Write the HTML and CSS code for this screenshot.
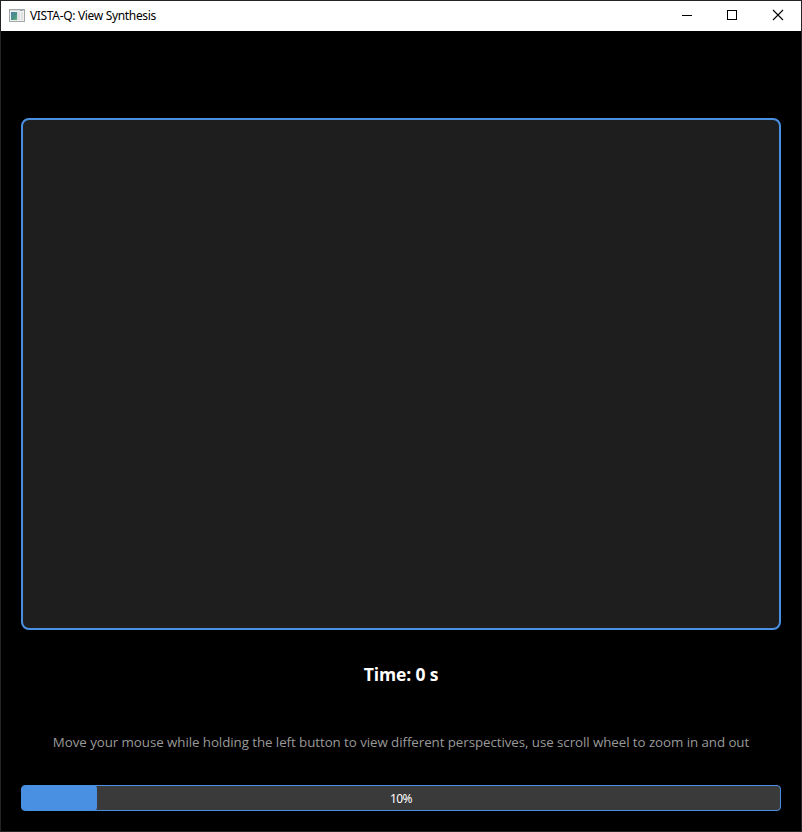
FILE: index.html
```
<!DOCTYPE html>
<html lang="en">
<head>
<meta charset="utf-8">
<title>VISTA-Q: View Synthesis</title>
<link rel="stylesheet" href="styles.css">
</head>
<body>
<div class="window">
  <header class="titlebar">
    <svg class="app-icon" width="16" height="16" viewBox="0 0 16 16" shape-rendering="crispEdges">
      <defs><linearGradient id="pane" x1="0" y1="0" x2="1" y2="1"><stop offset="0" stop-color="#4f7fa8"/><stop offset=".6" stop-color="#4b9384"/><stop offset="1" stop-color="#65b078"/></linearGradient></defs>
      <rect x="0.5" y="1.5" width="15" height="12" fill="#f1f1f1" stroke="#a2a7aa"/>
      <rect x="1" y="2" width="14" height="1" fill="#d5d9db"/>
      <rect x="2" y="4" width="6" height="8" fill="url(#pane)"/>
      <rect x="8" y="4" width="3" height="8" fill="#dfe2e4"/>
      <rect x="12" y="4" width="2" height="8" fill="#e0e0e0"/>
      <rect x="11" y="2" width="3" height="1" fill="#9ba8b0"/>
    </svg>
    <h1 class="title">VISTA-Q: View Synthesis</h1>
    <div class="controls">
      <svg width="46" height="30" viewBox="0 0 46 30"><path d="M17 14.5h10" stroke="#000"/></svg>
      <svg width="46" height="30" viewBox="0 0 46 30"><rect x="16.5" y="9.5" width="9" height="9" fill="none" stroke="#000"/></svg>
      <svg width="46" height="30" viewBox="0 0 46 30"><path d="M16 9l10 10M26 9L16 19" stroke="#000" stroke-width="1.1"/></svg>
    </div>
  </header>
  <main class="content">
    <div class="viewport"></div>
    <p class="time">Time: 0 s</p>
    <p class="hint">Move your mouse while holding the left button to view different perspectives, use scroll wheel to zoom in and out</p>
    <div class="progress"><div class="chunk"></div><span class="percent">10%</span></div>
  </main>
</div>
</body>
</html>
```
FILE: styles.css
```
* { box-sizing: border-box; }
body { margin: 0; background: #242424; font-family: "Open Sans", "Noto Sans", sans-serif; }
.window { width: 802px; height: 832px; border: 1px solid #242426; background: #000; display: flex; flex-direction: column; }
.titlebar { height: 30px; flex: none; background: #fff; display: flex; align-items: center; padding-left: 8px; }
.app-icon { margin-right: 5px; }
.title { margin: 0; font-family: "Noto Sans", sans-serif; font-size: 12px; font-weight: 400; line-height: 30px; letter-spacing: -0.33px; color: #000; white-space: nowrap; }
.controls { margin-left: auto; display: flex; margin-right: -2px; }
.controls svg { display: block; }
.content { flex: 1; display: flex; flex-direction: column; padding: 87px 20px 20px; }
.viewport { height: 512px; flex: none; border: 2px solid #4a90e2; border-radius: 8px; background: #1e1e1e; }
.time { margin: 31px 0 0; height: 26px; line-height: 26px; font-size: 17.5px; font-weight: 700; color: #fff; text-align: center; letter-spacing: -0.15px; }
.hint { margin: 45px 0 0; height: 20px; line-height: 20px; font-size: 13.33px; letter-spacing: -0.065px; color: #999; text-align: center; white-space: nowrap; }
.progress { margin-top: auto; height: 26px; border: 1px solid #4a90e2; border-radius: 4px; background: #3a3a3a; display: grid; align-items: center; }
.chunk { grid-area: 1 / 1; width: 75px; height: 24px; background: #4a90e2; border-radius: 2px; }
.percent { grid-area: 1 / 1; padding-top: 2px; text-align: center; font-family: "Noto Sans", sans-serif; font-size: 12px; letter-spacing: -0.5px; line-height: 22px; color: #fff; }
.controls { transform: translateX(0); }
```
